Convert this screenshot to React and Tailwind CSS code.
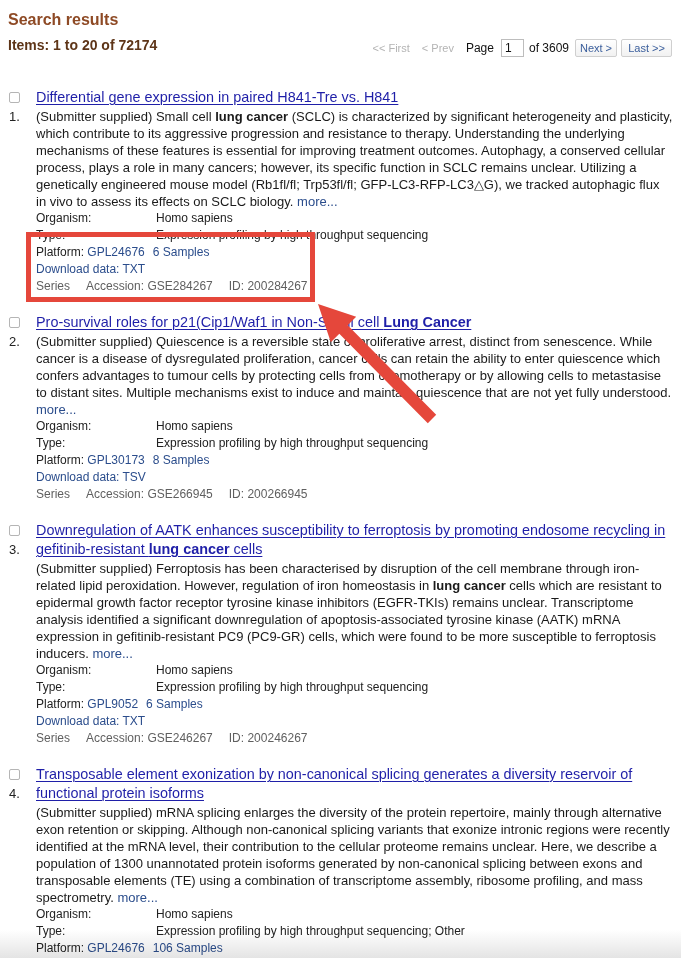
import React from "react";

const LINK = "text-[#2b4d8c]";

function Meta({ label, value }) {
  return (
    <div className="flex text-[12px] leading-[17px] text-[#222]">
      <div className="w-[120px] shrink-0">{label}</div>
      <div>{value}</div>
    </div>
  );
}

function Result({ n, title, body, type, platform, samples, download, accession, id, partial }) {
  return (
    <div className="flex mb-[18px]">
      <div className="w-[28px] shrink-0 pl-[1px]">
        <div className="h-[19px] flex items-center">
          <div className="w-[11px] h-[11px] rounded-[2px] border border-[#b5b5b5] bg-white" />
        </div>
        <div className="text-[13px] leading-[17px] text-[#222] mt-[1px]">{n}.</div>
      </div>
      <div className="flex-1 min-w-0">
        <div className="text-[14.4px] leading-[19px]">
          <a className="text-[#1f1fa8] underline underline-offset-[2px] decoration-[1px]" href="#">{title}</a>
        </div>
        <div className="mt-[1px] text-[13px] leading-[17px] text-[#1a1a1a]">
          {body} <a className={LINK} href="#">more...</a>
        </div>
        <Meta label="Organism:" value="Homo sapiens" />
        <Meta label="Type:" value={type} />
        <div className="text-[12px] leading-[17px] text-[#222]">
          Platform: <a className={LINK} href="#">{platform}</a>
          <a className={LINK + " ml-[8px]"} href="#">{samples}</a>
        </div>
        {!partial && (
          <>
            <div className="text-[12px] leading-[17px]">
              <a className={LINK} href="#">Download data: {download}</a>
            </div>
            <div className="text-[12px] leading-[17px] text-[#5f5f5f] flex gap-[16px]">
              <span>Series</span>
              <span>Accession: {accession}</span>
              <span>ID: {id}</span>
            </div>
          </>
        )}
      </div>
    </div>
  );
}

export default function App() {
  return (
    <div className="relative h-[958px] w-[681px] overflow-hidden bg-white font-['Liberation_Sans',Arial,sans-serif]">
      <div className="px-[8px] pt-[10px]">
        <h2 className="text-[16px] leading-[19px] font-bold text-[#8e4a25]">Search results</h2>
        <div className="mt-[6px] flex items-start justify-between">
          <div className="text-[14px] leading-[20px] font-bold text-[#5e3518]">Items: 1 to 20 of 72174</div>
          <div className="mt-[4px] flex items-center h-[18px] text-[11px] text-[#111] mr-[1px]">
            <span className="text-[#b4b4b4]">&lt;&lt; First</span>
            <span className="text-[#b4b4b4] ml-[12px]">&lt; Prev</span>
            <span className="ml-[12px] text-[12px]">Page</span>
            <div className="ml-[7px] w-[23px] h-[18px] border border-[#bdbdbd] text-[12px] leading-[16px] pl-[3px] bg-white">1</div>
            <span className="ml-[5px] text-[12px]">of 3609</span>
            <div className="ml-[6px] h-[18px] w-[42px] border border-[#cfcfcf] rounded-[2px] bg-linear-to-b from-white to-[#f1f1f1] text-[#3a5e9c] text-[11px] leading-[16px] text-center">Next &gt;</div>
            <div className="ml-[4px] h-[18px] w-[51px] border border-[#cfcfcf] rounded-[2px] bg-linear-to-b from-white to-[#f1f1f1] text-[#3a5e9c] text-[11px] leading-[16px] text-center">Last &gt;&gt;</div>
          </div>
        </div>

        <div className="mt-[31px]">
          <Result
            n={1}
            title="Differential gene expression in paired H841-Tre vs. H841"
            body={<>(Submitter supplied) Small cell <b>lung cancer</b> (SCLC) is characterized by significant heterogeneity and plasticity, which contribute to its aggressive progression and resistance to therapy. Understanding the underlying mechanisms of these features is essential for improving treatment outcomes. Autophagy, a conserved cellular process, plays a role in many cancers; however, its specific function in SCLC remains unclear. Utilizing a genetically engineered mouse model (Rb1fl/fl; Trp53fl/fl; GFP-LC3-RFP-LC3△G), we tracked autophagic flux in vivo to assess its effects on SCLC biology.</>}
            type="Expression profiling by high throughput sequencing"
            platform="GPL24676"
            samples="6 Samples"
            download="TXT"
            accession="GSE284267"
            id="200284267"
          />
          <Result
            n={2}
            title={<>Pro-survival roles for p21(Cip1/Waf1 in Non-Small cell <b>Lung Cancer</b></>}
            body={<>(Submitter supplied) Quiescence is a reversible state of proliferative arrest, distinct from senescence. While cancer is a disease of dysregulated proliferation, cancer cells can retain the ability to enter quiescence which confers advantages to tumour cells by protecting cells from chemotherapy or by allowing cells to metastasise to distant sites. Multiple mechanisms exist to induce and maintain quiescence that are not yet fully understood.</>}
            type="Expression profiling by high throughput sequencing"
            platform="GPL30173"
            samples="8 Samples"
            download="TSV"
            accession="GSE266945"
            id="200266945"
          />
          <Result
            n={3}
            title={<>Downregulation of AATK enhances susceptibility to ferroptosis by promoting endosome recycling in gefitinib-resistant <b>lung cancer</b> cells</>}
            body={<>(Submitter supplied) Ferroptosis has been characterised by disruption of the cell membrane through iron-related lipid peroxidation. However, regulation of iron homeostasis in <b>lung cancer</b> cells which are resistant to epidermal growth factor receptor tyrosine kinase inhibitors (EGFR-TKIs) remains unclear. Transcriptome analysis identified a significant downregulation of apoptosis-associated tyrosine kinase (AATK) mRNA expression in gefitinib-resistant PC9 (PC9-GR) cells, which were found to be more susceptible to ferroptosis inducers.</>}
            type="Expression profiling by high throughput sequencing"
            platform="GPL9052"
            samples="6 Samples"
            download="TXT"
            accession="GSE246267"
            id="200246267"
          />
          <Result
            n={4}
            partial
            title="Transposable element exonization by non-canonical splicing generates a diversity reservoir of functional protein isoforms"
            body={<>(Submitter supplied) mRNA splicing enlarges the diversity of the protein repertoire, mainly through alternative exon retention or skipping. Although non-canonical splicing variants that exonize intronic regions were recently identified at the mRNA level, their contribution to the cellular proteome remains unclear. Here, we describe a population of 1300 unannotated protein isoforms generated by non-canonical splicing between exons and transposable elements (TE) using a combination of transcriptome assembly, ribosome profiling, and mass spectrometry.</>}
            type="Expression profiling by high throughput sequencing; Other"
            platform="GPL24676"
            samples="106 Samples"
          />
        </div>
      </div>

      {/* annotation box */}
      <div className="absolute left-[26px] top-[232px] w-[289px] h-[70px] border-[5px] border-[#e5473b] pointer-events-none" />
      {/* annotation arrow */}
      <svg className="absolute left-0 top-0 pointer-events-none" width="681" height="958">
        <polygon
          fill="#e5473b"
          points="318,304 356.2,316.8 347.7,325.3 436.2,414.8 427.8,423.2 339.3,333.7 330.8,342.2"
        />
      </svg>
      {/* bottom fade */}
      <div className="absolute left-0 right-0 bottom-0 h-[28px] bg-linear-to-b from-white to-[#e4e4e4] mix-blend-multiply pointer-events-none" />
    </div>
  );
}
